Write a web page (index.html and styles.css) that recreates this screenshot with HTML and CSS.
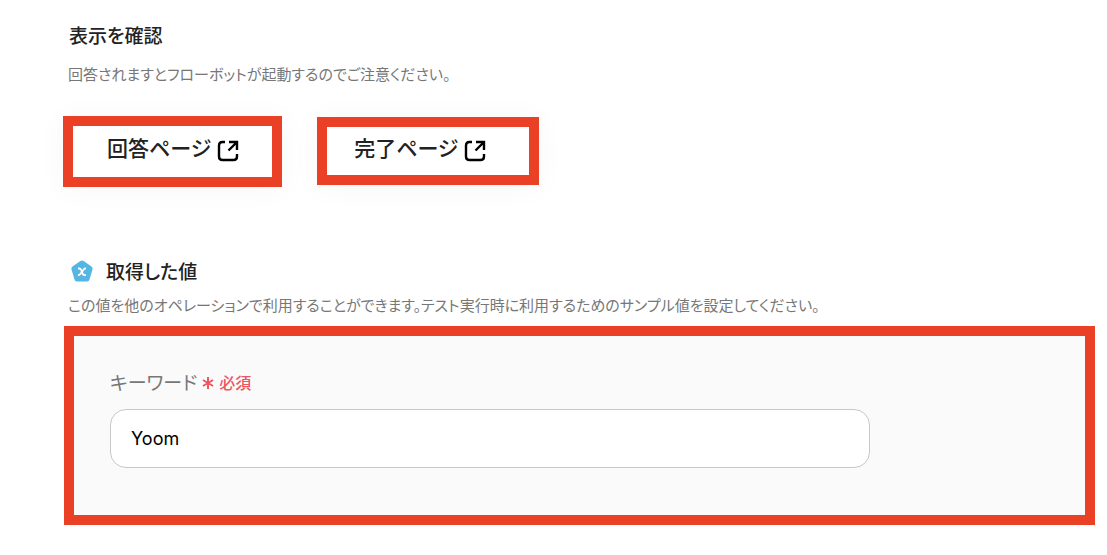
FILE: index.html
```html
<!DOCTYPE html>
<html lang="ja">
<head>
<meta charset="utf-8">
<title>表示を確認</title>
<link rel="stylesheet" href="styles.css">
</head>
<body>
<main class="page">
  <section class="section">
    <h2 class="heading">表示を確認</h2>
    <p class="note">回答されますとフローボットが起動するのでご注意ください。</p>
    <div class="links">
      <a class="page-link page-link-answer" href="#answer">回答ページ
        <svg class="link-icon" viewBox="0 0 22 22" aria-hidden="true"><path d="M8 2H5.500Q2 2 2 5.500V16.500Q2 20 5.500 20H16.500Q20 20 20 16.500V14M12 2H20V10M20 2L11.500 10.500"/></svg>
      </a>
      <a class="page-link page-link-done" href="#done">完了ページ
        <svg class="link-icon" viewBox="0 0 22 22" aria-hidden="true"><path d="M8 2H5.500Q2 2 2 5.500V16.500Q2 20 5.500 20H16.500Q20 20 20 16.500V14M12 2H20V10M20 2L11.500 10.500"/></svg>
      </a>
    </div>
  </section>
  <section class="section">
    <h2 class="heading heading-values">
      <svg class="value-icon" viewBox="0 0 22 22" aria-hidden="true"><path class="badge" d="M9.400 1Q11 0 12.600 1L20.500 6.600Q22 7.700 21.500 9.500L18.500 19.500Q18 21.500 16 21.500H6Q4 21.500 3.500 19.500L.5 9.500Q0 7.700 1.500 6.600Z"/><path class="mark" d="M7 8.500H8.300Q9.500 8.500 10 9.700L11.800 14Q12.400 15.200 13.700 15.200H15M15 8.500Q13.700 8.300 12.700 9.500L9.300 14Q8.400 15.200 7 15"/></svg>
      取得した値
    </h2>
    <p class="note">この値を他のオペレーションで利用することができます。テスト実行時に利用するためのサンプル値を設定してください。</p>
    <div class="panel">
      <label class="label" for="keyword">キーワード
        <span class="required"><svg class="asterisk" viewBox="0 0 12 12" aria-hidden="true"><path d="M6 0V12M1 3L11 9M11 3L1 9"/></svg>必須</span>
      </label>
      <input class="field" id="keyword" type="text" value="Yoom">
    </div>
  </section>
</main>
</body>
</html>
```
FILE: styles.css
```css
* { box-sizing: border-box; }

body {
  margin: 0;
  background: #fff;
  color: #222;
  font-family: "Noto Sans CJK JP", sans-serif;
  font-feature-settings: "palt";
}

.page {
  display: flex;
  flex-direction: column;
  gap: 68px;
  padding: 19px 12px 30px 64px;
}

.heading {
  display: flex;
  align-items: center;
  gap: 13px;
  margin: 0;
  padding-left: 5px;
  font-size: 19px;
  line-height: 32px;
  font-weight: 500;
}

.heading-values { padding-left: 7px; }

.note {
  margin: 0;
  padding-left: 4px;
  color: #777;
  font-size: 15px;
  font-weight: 400;
  line-height: 24px;
}

.heading + .note { margin-top: 11px; }
.heading-values + .note { margin-top: 6px; }

.links {
  display: flex;
  align-items: flex-start;
  gap: 35px;
  margin: 30px 0 0 -1px;
}

.page-link {
  display: flex;
  gap: 6px;
  border: 10px solid #ea4025;
  background: #fff;
  box-shadow: 0 2px 30px rgba(0, 0, 0, 0.04);
  color: #222;
  font-size: 21px;
  font-weight: 500;
  line-height: 32px;
  text-decoration: none;
}

.page-link-answer { padding: 5px 33px 14px 34px; }
.page-link-done { margin-top: 1px; padding: 4px 43px 12px 27px; }

.link-icon {
  width: 22px;
  height: 22px;
  margin-top: 9px;
  fill: none;
  stroke: #000;
  stroke-width: 2.4;
}

.value-icon { width: 22px; height: 22px; }
.badge { fill: #55b5e3; }
.mark { fill: none; stroke: #fff; stroke-width: 1.8; }

.panel {
  margin-top: 9px;
  padding: 30px 36px 47px;
  border: 10px solid #ea4025;
  background: #fafafa;
}

.label {
  display: flex;
  align-items: center;
  gap: 5px;
  color: #777;
  font-size: 19px;
  line-height: 32px;
}

.required {
  display: flex;
  align-items: center;
  gap: 5px;
  color: #ed5560;
  font-size: 16px;
  font-weight: 500;
}

.asterisk {
  width: 12px;
  height: 12px;
  margin-top: 2px;
  stroke: #ed5560;
  stroke-width: 2;
}

.field {
  display: block;
  width: 100%;
  max-width: 760px;
  height: 59px;
  margin-top: 11px;
  padding: 0 20px;
  border: 1px solid #c8c8c8;
  border-radius: 16px;
  background: #fff;
  color: #000;
  font-family: Inter, sans-serif;
  font-size: 18px;
}
```
